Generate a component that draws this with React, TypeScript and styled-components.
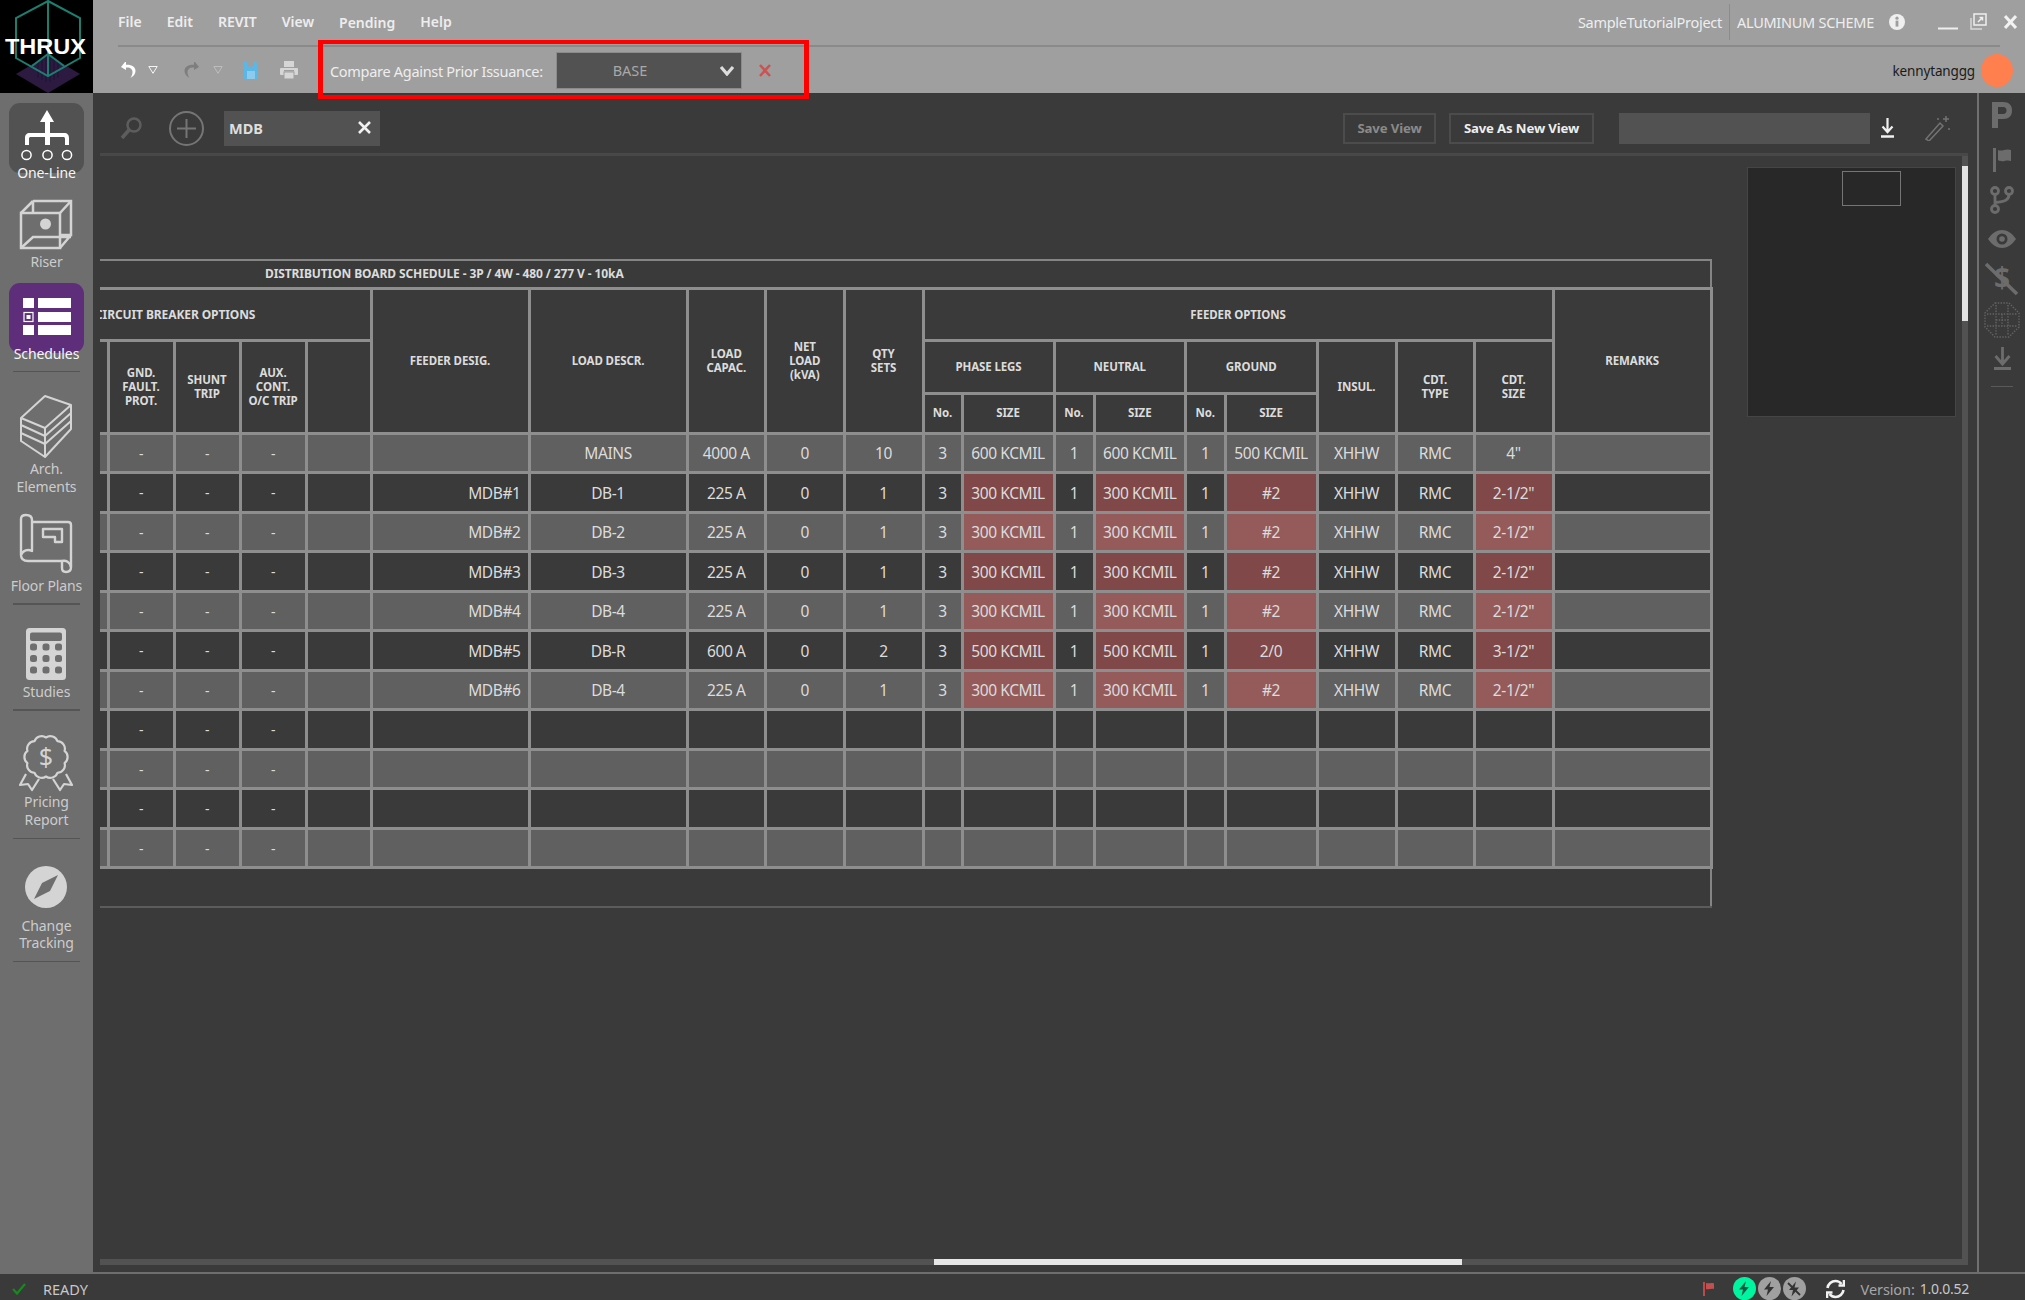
import React from "react";
import styled, { createGlobalStyle } from "styled-components";

const Global = createGlobalStyle`
  html, body { margin: 0; padding: 0; background: #3a3a3a; }
  * { box-sizing: border-box; }
  body { font-family: "Noto Sans", "Open Sans", sans-serif; }
`;

const Page = styled.div`
  width: 2025px; height: 1300px; display: flex; flex-direction: column;
  background: #3a3a3a; overflow: hidden;
`;
const TopBar = styled.header`
  height: 93px; flex: none; display: flex; background: #9f9f9f; position: relative;
`;
const Logo = styled.svg`
  width: 93px; height: 93px; flex: none; display: block; background: #000;
`;
const TopBody = styled.div`
  flex: 1; min-width: 0; display: flex; flex-direction: column;
`;
const MenuRow = styled.div`
  height: 45px; flex: none; display: flex; align-items: center; padding: 0 8px 2px 25px;
`;
const Menu = styled.nav`
  display: flex; gap: 25px;
`;
const MenuItem = styled.span<{ $low?: boolean }>`
  font-size: 14px; font-weight: 600; color: #ededed;
  transform: translateY(${p => (p.$low ? 1 : 0)}px);
`;
const ProjectInfo = styled.div`
  margin-left: auto; display: flex; align-items: center; height: 36px; color: #eeeeee; font-size: 14.5px; letter-spacing: -0.27px;
`;
const ProjectName = styled.span`
  padding-right: 7px; border-right: 1px solid #8c8c8c; line-height: 36px;
`;
const SchemeName = styled.span`
  padding-left: 7px; margin-right: 15px;
`;
const WindowGlyph = styled.svg<{ $ml: number }>`
  display: block; flex: none; margin-left: ${p => p.$ml}px;
`;
const Rule = styled.div`
  height: 2px; flex: none; margin: 0 25px; background: #8a8a8a;
`;
const ToolRow = styled.div`
  flex: 1; display: flex; align-items: center; padding: 0 12px 0 27px;
`;
const ToolGlyph = styled.svg<{ $ml: number }>`
  display: block; flex: none; margin-left: ${p => p.$ml}px;
`;
const CompareGroup = styled.div`
  position: relative; align-self: stretch; display: flex; align-items: center; margin-left: 33px;
`;
const CompareLabel = styled.span`
  width: 226px; flex: none; font-size: 14.5px; color: #eeeeee; letter-spacing: -0.3px; white-space: nowrap; padding-top: 1px; margin-left: -1px;
`;
const Select = styled.div`
  width: 186px; height: 37px; flex: none; display: flex; align-items: center;
  background: #525252; border: 1px solid #8b8b8b; color: #a8a8a8; font-size: 14.5px; position: relative;
`;
const SelectValue = styled.span`
  width: 146px; text-align: center;
`;
const Chevron = styled.svg`
  display: block; flex: none; margin-left: 17px;
`;
const RedFrame = styled.div`
  position: absolute; left: -13px; right: -38px; top: -7px; bottom: -6px;
  border: solid #ff0000; border-width: 4px 5px; z-index: 5; pointer-events: none;
`;
const UserArea = styled.div`
  margin-left: auto; display: flex; align-items: center; gap: 6px;
`;
const UserName = styled.span`
  font-size: 13.5px; color: #1a1a1a; letter-spacing: -0.15px; padding-top: 1px;
`;
const Avatar = styled.div`
  width: 32px; height: 33px; border-radius: 50%; background: #ff7f4f;
`;

const Middle = styled.div`
  flex: 1; min-height: 0; display: flex;
`;
const Sidebar = styled.aside`
  width: 93px; flex: none; background: #6e6e6e; padding-top: 10px; display: flex; flex-direction: column; align-items: stretch;
`;
const NavItem = styled.div<{ $gap: number; $tile?: string; $height?: number }>`
  margin-top: ${p => p.$gap}px;
  ${p => p.$tile ? `margin-left: 9px; margin-right: 9px; border-radius: 11px; background: ${p.$tile};` : ""}
  ${p => p.$height ? `height: ${p.$height}px;` : ""}
  display: flex; flex-direction: column; align-items: center; flex: none;
`;
const NavGlyph = styled.svg`
  display: block; flex: none;
`;
const NavLabel = styled.span<{ $bright?: boolean }>`
  display: block; width: 93px; flex: none; text-align: center; font-size: 14px; line-height: 17.5px; letter-spacing: -0.1px;
  color: ${p => (p.$bright ? "#f6f6f6" : "#cccccc")};
`;
const NavRule = styled.div<{ $gap: number }>`
  height: 1.5px; margin: ${p => p.$gap}px 13px 0; background: #555555; flex: none;
`;

const Content = styled.main`
  flex: 1; min-width: 0; display: flex; flex-direction: column;
`;
const ViewBar = styled.div`
  height: 63px; flex: none; margin: 0 9px 0 7px; border-bottom: 3px solid #484848; padding: 10px 18px 0 0; display: flex; align-items: center;
`;
const BarGlyph = styled.svg<{ $ml: number }>`
  display: block; flex: none; margin-left: ${p => p.$ml}px;
`;
const TabChip = styled.div`
  width: 156px; height: 35px; margin-left: 20px; background: #525252; display: flex; align-items: center; justify-content: space-between;
  padding: 0 9px 1px 5px; color: #dedede; font-weight: 700; font-size: 14.5px;
`;
const ViewButton = styled.button<{ $dim?: boolean; $w: number }>`
  height: 31px; width: ${p => p.$w}px; border: 2px solid #4c4c4c; background: transparent; font: 700 13.2px "Noto Sans", sans-serif; letter-spacing: -0.15px; padding: 0;
  color: ${p => (p.$dim ? "#8a8a8a" : "#eeeeee")};
`;
const SaveGroup = styled.div`
  margin-left: auto; display: flex; align-items: center; gap: 13px;
`;
const ViewInput = styled.div`
  width: 251px; height: 31px; background: #525252; margin-left: 12px;
`;
const Workspace = styled.div`
  flex: 1; min-height: 0; display: flex; margin: 0 9px 7px 7px;
`;
const WorkColumn = styled.div`
  flex: 1; min-width: 0; display: flex; flex-direction: column;
`;
const Canvas = styled.div`
  flex: 1; min-height: 0; position: relative; overflow: hidden; padding-top: 103px;
`;
const VTrack = styled.div`
  width: 6px; flex: none; background: #525252;
`;
const VThumb = styled.div`
  width: 6px; height: 155px; margin-top: 10px; background: #e2e2e2;
`;
const HTrack = styled.div`
  height: 6px; flex: none; background: #525252;
`;
const HThumb = styled.div`
  height: 6px; width: 528px; margin-left: 834px; background: #e6e6e6;
`;
const MiniMap = styled.div`
  position: absolute; top: 11px; right: 6px; width: 209px; height: 250px; background: #282828; border: 1.5px solid #454545;
`;
const MiniFrame = styled.div`
  position: absolute; left: 94px; top: 3px; width: 59px; height: 35px; border: 1.5px solid #757575;
`;

const Table = styled.table`
  width: 1611px; table-layout: fixed; border-collapse: collapse; color: #dcdcdc;
`;
const TitleCell = styled.th`
  height: 28px; padding: 0 0 0 165px; text-align: left; font-size: 12px; font-weight: 700; color: #dcdcdc;
  border-top: 2px solid #858585; border-right: 2px solid #858585; border-bottom: 3px solid #8e8e8e; white-space: nowrap; letter-spacing: -0.1px;
`;
const HeadCell = styled.th<{ $clip?: boolean; $noLeft?: boolean }>`
  padding: 1px 0 0; border: 3px solid #8e8e8e; font-size: 11.5px; font-weight: 700; line-height: 14.3px; color: #dcdcdc; text-align: center; letter-spacing: -0.1px;
  ${p => p.$clip ? "overflow: hidden; white-space: nowrap; text-align: left; font-size: 12px;" : ""}
  ${p => p.$noLeft ? "border-left: none;" : ""}
`;
const ClippedTitle = styled.span`
  display: inline-block; margin-left: -5px;
`;
const HeadTopRow = styled.tr`
  height: 52.5px;
`;
const HeadSubRow = styled.tr`
  height: 40px;
`;
const DataRow = styled.tr<{ $light: boolean }>`
  height: 39.5px; background: ${p => (p.$light ? "#606060" : "#3a3a3a")};
`;
const Cell = styled.td<{ $hot?: boolean; $light?: boolean; $right?: boolean; $noLeft?: boolean; $small?: boolean }>`
  padding: ${p => (p.$right ? "1px 7px 0 0" : "1px 0 0")}; border: 3px solid #8e8e8e; text-align: ${p => (p.$right ? "right" : "center")};
  font-size: ${p => (p.$small ? 14 : 15.5)}px; color: #dcdcdc; letter-spacing: -0.4px; white-space: nowrap;
  ${p => p.$hot ? `background: ${p.$light ? "#955b5b" : "#804848"};` : ""}
  ${p => p.$noLeft ? "border-left: none;" : ""}
`;
const FootCell = styled.td`
  height: 39px; border-top: 3px solid #8e8e8e; border-right: 2px solid #858585; border-bottom: 2px solid #5c5c5c;
`;

const Rail = styled.aside`
  width: 48px; flex: none; border-left: 2px solid #707070; padding-top: 2px; display: flex; flex-direction: column; align-items: center;
`;
const RailSlot = styled.div`
  height: 40.5px; flex: none; display: flex; align-items: center; justify-content: center;
`;
const RailGlyph = styled.svg<{ $down?: number }>`
  display: block; margin-top: ${p => p.$down ?? 0}px;
`;
const RailRule = styled.div`
  width: 22px; height: 1.5px; background: #5a5a5a; margin-top: 7px;
`;

const StatusBar = styled.footer`
  height: 28px; flex: none; border-top: 2px solid #6e6e6e; display: flex; align-items: center; padding: 3px 56px 0 12px; color: #c8c8c8; font-size: 14.5px;
`;
const ReadyText = styled.span`
  margin-left: 17px;
`;
const StatusGlyph = styled.svg<{ $ml: number }>`
  display: block; flex: none; margin-left: ${p => p.$ml}px;
`;
const StatusDot = styled.div<{ $bg: string; $ml: number }>`
  width: 23px; height: 23px; border-radius: 50%; background: ${p => p.$bg}; margin-left: ${p => p.$ml}px; flex: none;
  display: flex; align-items: center; justify-content: center;
`;
const VersionLabel = styled.span`
  margin-left: 16px; color: #a6a6a6; letter-spacing: -0.1px;
`;
const VersionValue = styled.span`
  margin-left: 5px; color: #c8c8c8; font-size: 14px; letter-spacing: -0.25px;
`;
const Spacer = styled.div`
  flex: 1;
`;

const scallop = (cx: number, cy: number, R: number, n: number) => {
  const pts = Array.from({ length: n }, (_, i) => {
    const a = (i / n) * Math.PI * 2 - Math.PI / 2;
    return [cx + R * Math.cos(a), cy + R * Math.sin(a)];
  });
  const chord = 2 * R * Math.sin(Math.PI / n);
  const r = (chord * 0.62).toFixed(2);
  return `M${pts[0][0].toFixed(2)} ${pts[0][1].toFixed(2)} ` +
    pts.map((_, i) => {
      const q = pts[(i + 1) % n];
      return `A${r} ${r} 0 0 1 ${q[0].toFixed(2)} ${q[1].toFixed(2)}`;
    }).join(" ") + "Z";
};

const colWidths = [8, 66, 66, 66, 65, 158, 158, 78.5, 78.5, 79, 39, 92, 40, 91.5, 39.5, 92, 79, 78, 79, 158];

type Row = { feeder: string; load: string; cap: string; net: string; qty: string; ph: string; ne: string; gr: string; size: string };
const filled: Row[] = [
  { feeder: "", load: "MAINS", cap: "4000 A", net: "0", qty: "10", ph: "600 KCMIL", ne: "600 KCMIL", gr: "500 KCMIL", size: '4"' },
  { feeder: "MDB#1", load: "DB-1", cap: "225 A", net: "0", qty: "1", ph: "300 KCMIL", ne: "300 KCMIL", gr: "#2", size: '2-1/2"' },
  { feeder: "MDB#2", load: "DB-2", cap: "225 A", net: "0", qty: "1", ph: "300 KCMIL", ne: "300 KCMIL", gr: "#2", size: '2-1/2"' },
  { feeder: "MDB#3", load: "DB-3", cap: "225 A", net: "0", qty: "1", ph: "300 KCMIL", ne: "300 KCMIL", gr: "#2", size: '2-1/2"' },
  { feeder: "MDB#4", load: "DB-4", cap: "225 A", net: "0", qty: "1", ph: "300 KCMIL", ne: "300 KCMIL", gr: "#2", size: '2-1/2"' },
  { feeder: "MDB#5", load: "DB-R", cap: "600 A", net: "0", qty: "2", ph: "500 KCMIL", ne: "500 KCMIL", gr: "2/0", size: '3-1/2"' },
  { feeder: "MDB#6", load: "DB-4", cap: "225 A", net: "0", qty: "1", ph: "300 KCMIL", ne: "300 KCMIL", gr: "#2", size: '2-1/2"' },
];

const ScheduleTable = () => (
  <Table>
    <colgroup>
      {colWidths.map((w, i) => <col key={i} width={w} />)}
    </colgroup>
    <thead>
      <tr>
        <TitleCell colSpan={20}>DISTRIBUTION BOARD SCHEDULE - 3P / 4W - 480 / 277 V - 10kA</TitleCell>
      </tr>
      <HeadTopRow>
        <HeadCell colSpan={5} $clip $noLeft><ClippedTitle>CIRCUIT BREAKER OPTIONS</ClippedTitle></HeadCell>
        <HeadCell rowSpan={3}>FEEDER DESIG.</HeadCell>
        <HeadCell rowSpan={3}>LOAD DESCR.</HeadCell>
        <HeadCell rowSpan={3}>LOAD<br />CAPAC.</HeadCell>
        <HeadCell rowSpan={3}>NET<br />LOAD<br />(kVA)</HeadCell>
        <HeadCell rowSpan={3}>QTY<br />SETS</HeadCell>
        <HeadCell colSpan={9}>FEEDER OPTIONS</HeadCell>
        <HeadCell rowSpan={3}>REMARKS</HeadCell>
      </HeadTopRow>
      <HeadTopRow>
        <HeadCell rowSpan={2} $noLeft />
        <HeadCell rowSpan={2}>GND.<br />FAULT.<br />PROT.</HeadCell>
        <HeadCell rowSpan={2}>SHUNT<br />TRIP</HeadCell>
        <HeadCell rowSpan={2}>AUX.<br />CONT.<br />O/C TRIP</HeadCell>
        <HeadCell rowSpan={2} />
        <HeadCell colSpan={2}>PHASE LEGS</HeadCell>
        <HeadCell colSpan={2}>NEUTRAL</HeadCell>
        <HeadCell colSpan={2}>GROUND</HeadCell>
        <HeadCell rowSpan={2}>INSUL.</HeadCell>
        <HeadCell rowSpan={2}>CDT.<br />TYPE</HeadCell>
        <HeadCell rowSpan={2}>CDT.<br />SIZE</HeadCell>
      </HeadTopRow>
      <HeadSubRow>
        <HeadCell>No.</HeadCell><HeadCell>SIZE</HeadCell>
        <HeadCell>No.</HeadCell><HeadCell>SIZE</HeadCell>
        <HeadCell>No.</HeadCell><HeadCell>SIZE</HeadCell>
      </HeadSubRow>
    </thead>
    <tbody>
      {filled.map((r, i) => {
        const light = i % 2 === 0;
        const hot = i > 0;
        return (
          <DataRow key={i} $light={light}>
            <Cell $noLeft />
            <Cell $small>-</Cell><Cell $small>-</Cell><Cell $small>-</Cell><Cell />
            <Cell $right>{r.feeder}</Cell>
            <Cell>{r.load}</Cell><Cell>{r.cap}</Cell><Cell>{r.net}</Cell><Cell>{r.qty}</Cell>
            <Cell>3</Cell><Cell $hot={hot} $light={light}>{r.ph}</Cell>
            <Cell>1</Cell><Cell $hot={hot} $light={light}>{r.ne}</Cell>
            <Cell>1</Cell><Cell $hot={hot} $light={light}>{r.gr}</Cell>
            <Cell>XHHW</Cell><Cell>RMC</Cell>
            <Cell $hot={hot} $light={light}>{r.size}</Cell>
            <Cell />
          </DataRow>
        );
      })}
      {[0, 1, 2, 3].map(i => (
        <DataRow key={i} $light={i % 2 === 1}>
          <Cell $noLeft />
          <Cell $small>-</Cell><Cell $small>-</Cell><Cell $small>-</Cell>
          {Array.from({ length: 16 }, (_, k) => <Cell key={k} />)}
        </DataRow>
      ))}
      <tr><FootCell colSpan={20} /></tr>
    </tbody>
  </Table>
);

const ic = "#d4d4d4";
const rail = "#6c6c6c";

export default function App() {
  return (
    <Page>
      <Global />
      <TopBar>
        <Logo viewBox="0 0 93 93">
          <polygon points="16,74 48,55 80,74 48,93" fill="#2d1a40" />
          <g stroke="#1f1030" strokeWidth="1">
            <path d="M38 60V78M42 58V80M46 57V82M50 57V82M54 58V80M58 60V78" />
          </g>
          <g fill="none" stroke="#1b7f70" strokeWidth="2">
            <polygon points="48,1 80,18 80,58 48,76 16,58 16,18" />
            <path d="M48 1V76M32 66L48 54L64 66" />
          </g>
          <text x="5" y="54" fontFamily="'Liberation Sans', sans-serif" fontWeight="700" fontSize="22" fill="#ffffff" textLength="81" lengthAdjust="spacingAndGlyphs">THRUX</text>
        </Logo>
        <TopBody>
          <MenuRow>
            <Menu>
              <MenuItem>File</MenuItem>
              <MenuItem>Edit</MenuItem>
              <MenuItem>REVIT</MenuItem>
              <MenuItem>View</MenuItem>
              <MenuItem $low>Pending</MenuItem>
              <MenuItem>Help</MenuItem>
            </Menu>
            <ProjectInfo>
              <ProjectName>SampleTutorialProject</ProjectName>
              <SchemeName>ALUMINUM SCHEME</SchemeName>
              <WindowGlyph $ml={0} width="16" height="16" viewBox="0 0 16 16">
                <circle cx="8" cy="8" r="8" fill="#efefef" />
                <rect x="6.6" y="6.6" width="2.8" height="6" fill="#9f9f9f" />
                <circle cx="8" cy="4.2" r="1.6" fill="#9f9f9f" />
              </WindowGlyph>
              <WindowGlyph $ml={33} width="20" height="16" viewBox="0 0 20 16">
                <rect x="0" y="13.5" width="20" height="2" fill="#efefef" />
              </WindowGlyph>
              <WindowGlyph $ml={12} width="17" height="17" viewBox="0 0 17 17" fill="none" stroke="#efefef" strokeWidth="1.5">
                <path d="M1 5V16H12" stroke="#d8d8d8" />
                <path d="M4 1H16V12H4Z" />
                <path d="M8 9L12.5 4.5M9.5 4.5H12.5V7.5" />
              </WindowGlyph>
              <WindowGlyph $ml={17} width="13" height="14" viewBox="0 0 13 14" stroke="#f2f2f2" strokeWidth="3">
                <path d="M1 1L12 13M12 1L1 13" />
              </WindowGlyph>
            </ProjectInfo>
          </MenuRow>
          <Rule />
          <ToolRow>
            <ToolGlyph $ml={0} width="16" height="18" viewBox="0 0 16 18" fill="none">
              <path d="M5 1L1 6L6 9V6.5C10 6 12.5 8 12.5 11C12.5 13 11.8 15 10.5 17C13.5 15 15.5 13 15.5 10C15.5 6 12 3.5 6 3.8V1Z" fill="#ffffff" />
            </ToolGlyph>
            <ToolGlyph $ml={12} width="10" height="8" viewBox="0 0 10 8" fill="none" stroke="#f5f5f5" strokeWidth="1">
              <path d="M.8.5H9.2L5 7.3Z" />
            </ToolGlyph>
            <ToolGlyph $ml={26} width="16" height="18" viewBox="0 0 16 18">
              <path d="M11 1L15 6L10 9V6.5C6 6 3.5 8 3.5 11C3.5 13 4.2 15 5.5 17C2.5 15 .5 13 .5 10C.5 6 4 3.5 10 3.8V1Z" fill="#7e7e7e" />
            </ToolGlyph>
            <ToolGlyph $ml={13} width="10" height="8" viewBox="0 0 10 8" fill="none" stroke="#bdbdbd" strokeWidth="1">
              <path d="M.8.5H9.2L5 7.3Z" />
            </ToolGlyph>
            <ToolGlyph $ml={21} width="14" height="18" viewBox="0 0 14 18">
              <path d="M0 0H11L14 3V18H0Z" fill="#5bb7e6" />
              <rect x="3" y="0" width="7" height="5.5" fill="#9f9f9f" />
              <rect x="3" y="10" width="8" height="8" fill="#8ccbeb" />
            </ToolGlyph>
            <ToolGlyph $ml={22} width="18" height="18" viewBox="0 0 18 18" fill="#d6d6d6">
              <rect x="4" y="0" width="10" height="6" />
              <rect x="0" y="7" width="18" height="7" rx="1" />
              <rect x="4" y="11" width="10" height="7" fill="#d6d6d6" stroke="#9f9f9f" strokeWidth="1" />
              <rect x="4" y="9" width="10" height="1.5" fill="#9f9f9f" />
            </ToolGlyph>
            <CompareGroup>
              <CompareLabel>Compare Against Prior Issuance:</CompareLabel>
              <Select>
                <SelectValue>BASE</SelectValue>
                <Chevron width="14" height="11" viewBox="0 0 14 11" fill="none" stroke="#dddddd" strokeWidth="3.2">
                  <path d="M1 2L7 9L13 2" />
                </Chevron>
              </Select>
              <ToolGlyph $ml={17} width="12" height="13" viewBox="0 0 12 13" stroke="#cd5252" strokeWidth="2.6">
                <path d="M1 1L11 12M11 1L1 12" />
              </ToolGlyph>
              <RedFrame />
            </CompareGroup>
            <UserArea>
              <UserName>kennytanggg</UserName>
              <Avatar />
            </UserArea>
          </ToolRow>
        </TopBody>
      </TopBar>

      <Middle>
        <Sidebar>
          <NavItem $gap={0} $tile="#525252" $height={70}>
            <NavGlyph width="74" height="61" viewBox="9 103 74 61" fill="none">
              <path d="M46 110L53 122H49V133H63C66.500 133 68 135 68 138V145H64V139C64 137.500 63.500 137 62 137H49V145H44V137H30C28.500 137 28 137.500 28 139V145H24V138C24 135 25.500 133 29 133H44V122H39Z" fill="#ffffff" />
              <g stroke="#ffffff" strokeWidth="1.5">
                <circle cx="25.500" cy="155" r="4.600" />
                <circle cx="46.500" cy="155" r="4.600" />
                <circle cx="66" cy="155" r="4.600" />
              </g>
            </NavGlyph>
            <NavLabel $bright>One-Line</NavLabel>
          </NavItem>
          <NavItem $gap={21}>
            <NavGlyph width="93" height="58.500" viewBox="0 195 93 58.500" fill="none" stroke={ic} strokeWidth="2.500">
              <path d="M21 214H60V249H21Z" />
              <path d="M33 202H71V236H60M33 202V214M21 214L33 202M60 214L71 202M21 249L33 238H71M60 249L71 236" />
              <circle cx="45.500" cy="225" r="5.500" fill={ic} stroke="none" />
            </NavGlyph>
            <NavLabel>Riser</NavLabel>
          </NavItem>
          <NavItem $gap={12.5} $tile="#5e2e7a" $height={70}>
            <NavGlyph width="74" height="62.500" viewBox="9 282 74 62.500" fill="#ffffff">
              <rect x="22" y="297" width="11" height="10" />
              <rect x="37" y="297" width="33" height="10" />
              <rect x="23" y="311.500" width="9" height="9" fill="none" stroke="#ffffff" strokeWidth="1.200" />
              <rect x="25.500" y="314" width="4" height="4" />
              <rect x="37" y="311" width="33" height="10" />
              <rect x="22" y="324" width="11" height="10" />
              <rect x="37" y="324" width="33" height="10" />
            </NavGlyph>
            <NavLabel $bright>Schedules</NavLabel>
          </NavItem>
          <NavRule $gap={18} />
          <NavItem $gap={17.500}>
            <NavGlyph width="93" height="70.500" viewBox="0 390 93 70.500" fill="none" stroke={ic} strokeWidth="2" strokeLinejoin="round">
              <path d="M45 396L71 405L45 428L21 418Z" />
              <path d="M21 418V425L45 436L71 413V405" />
              <path d="M21 425V433L45 444L71 421V413" />
              <path d="M21 433V441L45 457L71 429V421" />
              <path d="M45 428V457" />
            </NavGlyph>
            <NavLabel>Arch.<br />Elements</NavLabel>
          </NavItem>
          <NavItem $gap={14}>
            <NavGlyph width="93" height="67.500" viewBox="0 510 93 67.500" fill="none" stroke={ic} strokeWidth="2.400" strokeLinejoin="round">
              <path d="M21 556V520C21 517 23 516 26 516C30 516 32 518 32 521V552C28 550 23 551 21 556C21 560 24 562 28 562H62V569C62 572 64 573 66 573C69 573 71 571 71 568V526C71 524 70 523 68 523H32" />
              <path d="M62 562C66 561 70 563 71 568" />
              <path d="M43 530H62V543H55V538H43Z" />
            </NavGlyph>
            <NavLabel>Floor Plans</NavLabel>
          </NavItem>
          <NavRule $gap={9} />
          <NavItem $gap={17}>
            <NavGlyph width="93" height="61.500" viewBox="0 622 93 61.500">
              <rect x="26" y="628" width="40" height="52" rx="3.500" fill={ic} />
              <rect x="30" y="632.500" width="32" height="8.500" rx="2" fill="#6e6e6e" />
              {[647, 658.500, 670].map(y => [33.500, 46, 58.500].map(x => (
                <rect key={`${x}-${y}`} x={x - 3.500} y={y - 3.500} width="7" height="7" rx="2.500" fill="#6e6e6e" />
              )))}
            </NavGlyph>
            <NavLabel>Studies</NavLabel>
          </NavItem>
          <NavRule $gap={8.500} />
          <NavItem $gap={15}>
            <NavGlyph width="93" height="67.500" viewBox="0 725 93 67.500" fill="none" stroke={ic} strokeWidth="2.200" strokeLinejoin="round">
              <path d={scallop(46, 756, 19.500, 10)} />
              <text x="46" y="765" textAnchor="middle" fontFamily="'Noto Sans', sans-serif" fontSize="25" fill={ic} stroke="none">$</text>
              <path d="M26 773L20 784L28 783L32 789L39 778" />
              <path d="M66 773L72 784L64 783L60 789L53 778" />
            </NavGlyph>
            <NavLabel>Pricing<br />Report</NavLabel>
          </NavItem>
          <NavRule $gap={9.500} />
          <NavItem $gap={21}>
            <NavGlyph width="93" height="56.500" viewBox="0 860 93 56.500">
              <circle cx="46" cy="887" r="21" fill={ic} />
              <path d="M58 875L50 891L34 899L42 883Z" fill="#6e6e6e" />
            </NavGlyph>
            <NavLabel>Change<br />Tracking</NavLabel>
          </NavItem>
          <NavRule $gap={9} />
        </Sidebar>

        <Content>
          <ViewBar>
            <BarGlyph $ml={20} width="22" height="24" viewBox="0 0 22 24" fill="none" stroke="#5d5d5d">
              <circle cx="14" cy="9" r="6.500" strokeWidth="2.500" />
              <path d="M9 14L2 22" strokeWidth="3.500" />
            </BarGlyph>
            <BarGlyph $ml={27} width="35" height="35" viewBox="0 0 35 35" fill="none" stroke="#757575" strokeWidth="2">
              <circle cx="17.500" cy="17.500" r="16.500" />
              <path d="M17.500 8V27M8 17.500H27" />
            </BarGlyph>
            <TabChip>
              MDB
              <svg width="13" height="13" viewBox="0 0 13 13" stroke="#f0f0f0" strokeWidth="2.600">
                <path d="M1 1L12 12M12 1L1 12" />
              </svg>
            </TabChip>
            <SaveGroup>
              <ViewButton $dim $w={93}>Save View</ViewButton>
              <ViewButton $w={145}>Save As New View</ViewButton>
              <ViewInput />
              <BarGlyph $ml={-2} width="13" height="20" viewBox="0 0 13 20" fill="none" stroke="#f0f0f0" strokeWidth="2.200">
                <path d="M6.500 0V13M1.500 8.500L6.500 14L11.500 8.500" />
                <path d="M0 18.500H13" strokeWidth="2.500" />
              </BarGlyph>
              <BarGlyph $ml={17} width="26" height="26" viewBox="0 0 26 26" fill="none" stroke="#737373">
                <path d="M2 24L16 8L19 11L5 26Z" strokeWidth="1.500" />
                <path d="M22 1V7M19 4H25M25 13V15M14 3V5" strokeWidth="1.500" />
              </BarGlyph>
            </SaveGroup>
          </ViewBar>
          <Workspace>
            <WorkColumn>
              <Canvas>
                <ScheduleTable />
                <MiniMap><MiniFrame /></MiniMap>
              </Canvas>
              <HTrack><HThumb /></HTrack>
            </WorkColumn>
            <VTrack><VThumb /></VTrack>
          </Workspace>
        </Content>

        <Rail>
          <RailSlot>
            <RailGlyph width="22" height="26" viewBox="0 0 22 26">
              <path d="M1 0H12C18 0 21 3 21 8.500C21 14 18 17 12 17H7V26H1ZM7 5V12H12C14.500 12 15.500 10.500 15.500 8.500C15.500 6.500 14.500 5 12 5Z" fill={rail} />
            </RailGlyph>
          </RailSlot>
          <RailSlot>
            <RailGlyph $down={10} width="20" height="26" viewBox="0 0 20 26">
              <rect x="1" y="0" width="3" height="24" fill={rail} />
              <path d="M6 2C10 4 14 0 19 2V13C14 11 10 15 6 12Z" fill={rail} />
            </RailGlyph>
          </RailSlot>
          <RailSlot>
            <RailGlyph $down={7} width="24" height="28" viewBox="0 0 24 28" fill="none" stroke={rail} strokeWidth="2.800">
              <circle cx="5" cy="5" r="3.500" />
              <circle cx="19" cy="5" r="3.500" />
              <circle cx="5" cy="23" r="3.500" />
              <path d="M5 8.500V19.500M19 8.500C19 14 15 15.500 5 16.500" />
            </RailGlyph>
          </RailSlot>
          <RailSlot>
            <RailGlyph $down={4} width="28" height="18" viewBox="0 0 28 18">
              <path d="M0 9C4 3 9 0 14 0C19 0 24 3 28 9C24 15 19 18 14 18C9 18 4 15 0 9Z" fill={rail} />
              <circle cx="14" cy="9" r="5.500" fill="#3a3a3a" />
              <circle cx="14" cy="9" r="2.800" fill={rail} />
            </RailGlyph>
          </RailSlot>
          <RailSlot>
            <RailGlyph $down={4} width="34" height="34" viewBox="0 0 34 34">
              <path d="M1 2L32 32" stroke={rail} strokeWidth="3.500" />
              <text x="17" y="26" textAnchor="middle" fontFamily="'Noto Sans', sans-serif" fontWeight="700" fontSize="28" fill={rail}>$</text>
            </RailGlyph>
          </RailSlot>
          <RailSlot>
            <RailGlyph $down={5} width="36" height="36" viewBox="0 0 36 36" fill="none" stroke="#646464" strokeWidth="1.400" strokeDasharray="1.400 1.400">
              <path d="M11 1H25L35 11V25L25 35H11L1 25V11Z" />
              <path d="M12 3V33M24 3V33M3 12H33M3 24H33M18 12V24M12 18H24" />
            </RailGlyph>
          </RailSlot>
          <RailSlot>
            <RailGlyph width="17" height="23" viewBox="0 0 17 23" fill="none" stroke={rail} strokeWidth="2.800">
              <path d="M8.500 0V16M1.500 9L8.500 17L15.500 9" />
              <path d="M0 21.500H17" strokeWidth="3" />
            </RailGlyph>
          </RailSlot>
          <RailRule />
        </Rail>
      </Middle>

      <StatusBar>
        <StatusGlyph $ml={0} width="14" height="12" viewBox="0 0 14 12" fill="none" stroke="#148c1c" strokeWidth="2.200">
          <path d="M1 6L5 10.500L13 1" />
        </StatusGlyph>
        <ReadyText>READY</ReadyText>
        <Spacer />
        <StatusGlyph $ml={0} width="12" height="14" viewBox="0 0 12 14">
          <rect x="0" y="0" width="2" height="14" fill="#b84c4c" />
          <path d="M3 1C6 2 8 0 11 1.500V7C8 6 6 8 3 7Z" fill="#c25050" />
        </StatusGlyph>
        <StatusDot $bg="#00f5a0" $ml={18}>
          <svg width="12" height="15" viewBox="0 0 12 15"><path d="M8 0L1 8.500H5L3.500 15L11 6H6.500Z" fill="#0f5c44" /></svg>
        </StatusDot>
        <StatusDot $bg="#a0a0a0" $ml={2}>
          <svg width="12" height="15" viewBox="0 0 12 15"><path d="M8 0L1 8.500H5L3.500 15L11 6H6.500Z" fill="#333333" /></svg>
        </StatusDot>
        <StatusDot $bg="#a0a0a0" $ml={2}>
          <svg width="16" height="16" viewBox="0 0 16 16"><path d="M10 0.500L3 9H7L5.500 15.500L13 6.500H8.500Z" fill="#333333" /><path d="M2 2L14 14" stroke="#333333" strokeWidth="1.800" /></svg>
        </StatusDot>
        <StatusGlyph $ml={20} width="19" height="20" viewBox="0 0 19 20" fill="none" stroke="#f2f2f2" strokeWidth="2.600">
          <path d="M1.500 9C2 5 5.500 2 9.500 2C12 2 14 3 15.500 5M17.500 11C17 15 13.500 18 9.500 18C7 18 5 17 3.500 15" />
          <path d="M18 1V6.500H12.500M1 19V13.500H6.500" />
        </StatusGlyph>
        <VersionLabel>Version:</VersionLabel>
        <VersionValue>1.0.0.52</VersionValue>
      </StatusBar>
    </Page>
  );
}
